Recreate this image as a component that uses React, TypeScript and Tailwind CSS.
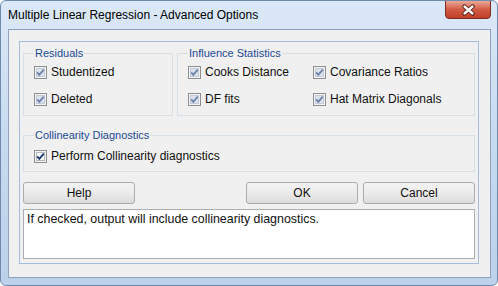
import React from "react";

const Check = ({ strong = false }: { strong?: boolean }) => (
  <svg width="13" height="13" viewBox="0 0 13 13" className="shrink-0">
    <rect x="0.5" y="0.5" width="12" height="12" fill="#f3f3f3" stroke="#8e8f8f" />
    <rect
      x="2.5"
      y="2.5"
      width="8"
      height="8"
      fill={strong ? "#fbfbfb" : "#dde3ec"}
      stroke={strong ? "#b3b8c0" : "#c3cbd8"}
    />
    <path
      d="M3.2 6.4 L5.3 8.8 L9.8 3.6"
      fill="none"
      stroke={strong ? "#1d3a72" : "#6f83ab"}
      strokeWidth="1.9"
    />
  </svg>
);

const Row = ({ label, strong }: { label: string; strong?: boolean }) => (
  <div className="flex items-center gap-[4px] h-[14px] text-[12px] leading-[14px] text-[#111]">
    <Check strong={strong} />
    <span>{label}</span>
  </div>
);

// group box: label sits on the top border line
const Group = ({
  title,
  className,
  children,
}: {
  title: string;
  className: string;
  children: React.ReactNode;
}) => (
  <div className={`flex flex-col border border-[#d5dfe5] pl-[10px] ${className}`}>
    <div className="-mt-[8px] h-[14px] flex">
      <span className="px-[1px] bg-[#f0f0f0] text-[11px] leading-[14px] text-[#1d4a94] whitespace-nowrap">
        {title}
      </span>
    </div>
    {children}
  </div>
);

const Button = ({ label }: { label: string }) => (
  <button className="w-[112px] h-[22px] rounded-[3px] border border-[#acacac] bg-linear-to-b from-[#f3f3f3] via-[#ebebeb] to-[#dcdcdc] text-[12px] leading-[20px] text-[#111]">
    {label}
  </button>
);

const App = () => {
  return (
    <div
      className="w-[498px] h-[286px] rounded-[6px] border border-[#6f8aab] bg-linear-to-b from-[#dbe8f7] via-[#c6daf0] to-[#bcd2ea] relative overflow-hidden"
      style={{ fontFamily: '"Liberation Sans", Arial, sans-serif' }}
    >
      {/* title bar */}
      <div className="h-[28px] flex items-center pl-[7px] text-[12px] text-black">
        Multiple Linear Regression - Advanced Options
      </div>
      <div className="absolute top-[-1px] right-[6px] w-[46px] h-[19px] rounded-b-[4px] border border-[#7b2c1f] bg-linear-to-b from-[#e9a999] via-[#d25a43] to-[#c23f28] flex items-center justify-center">
        <svg width="15" height="12" viewBox="0 0 15 12">
          <path d="M3.5 2.5 L11.5 9.5 M11.5 2.5 L3.5 9.5" stroke="#4a1a12" strokeWidth="4.2" strokeLinecap="round" />
          <path d="M3.5 2.5 L11.5 9.5 M11.5 2.5 L3.5 9.5" stroke="#ffffff" strokeWidth="2.4" strokeLinecap="round" />
        </svg>
      </div>

      {/* client area */}
      <div className="ml-[7px] w-[483px] h-[249px] border border-[#8ea2bc] bg-[#f0f0f0] pt-[11px] pl-[10px]">
        <div className="w-[460px] h-[223px] border border-[#a6bedd] px-[3px] pt-[11px] flex flex-col">
          <div className="flex gap-[4px]">
            <Group title="Residuals" className="w-[150px] h-[63px]">
              <div className="pt-[5px] flex flex-col gap-[13px]">
                <Row label="Studentized" />
                <Row label="Deleted" />
              </div>
            </Group>
            <Group title="Influence Statistics" className="w-[298px] h-[63px]">
              <div className="pt-[5px] grid grid-cols-[125px_1fr] gap-y-[13px]">
                <Row label="Cooks Distance" />
                <Row label="Covariance Ratios" />
                <Row label="DF fits" />
                <Row label="Hat Matrix Diagonals" />
              </div>
            </Group>
          </div>

          <div className="mt-[19px] flex">
            <Group title="Collinearity Diagnostics" className="w-[452px] h-[37px]">
              <div className="pt-[7px]">
                <Row label="Perform Collinearity diagnostics" strong />
              </div>
            </Group>
          </div>

          <div className="mt-[10px] flex w-[452px]">
            <Button label="Help" />
            <div className="flex-1" />
            <div className="flex gap-[5px]">
              <Button label="OK" />
              <Button label="Cancel" />
            </div>
          </div>

          <div className="mt-[5px] w-[452px] h-[50px] border border-[#abadb3] bg-white pl-[3px] pt-[2px] text-[12.4px] leading-[14px] text-[#111]">
            If checked, output will include collinearity diagnostics.
          </div>
        </div>
      </div>
    </div>
  );
};

export default App;
